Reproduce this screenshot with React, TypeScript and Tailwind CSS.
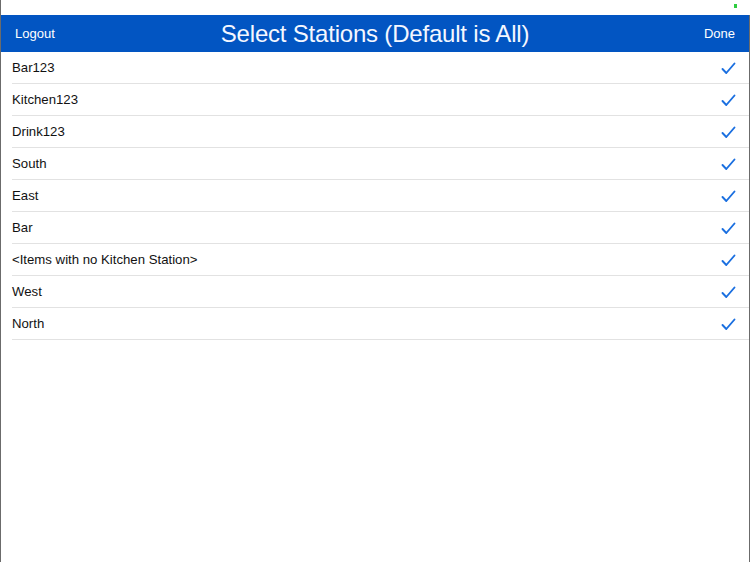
const stations = [
  "Bar123",
  "Kitchen123",
  "Drink123",
  "South",
  "East",
  "Bar",
  "<Items with no Kitchen Station>",
  "West",
  "North",
]

function Check() {
  return (
    <svg width="15" height="13" viewBox="0 0 15 13" fill="none">
      <path d="M1.5 7 L5.3 11 L13.5 1.5" stroke="#1a6fe0" strokeWidth="1.9" strokeLinecap="round" strokeLinejoin="round" />
    </svg>
  )
}

export default function App() {
  return (
    <div className="flex h-[562px] w-[750px] flex-col border-l border-[#6b6b6b] bg-white" style={{ fontFamily: '"Liberation Sans", Arial, sans-serif' }}>
      <div className="flex h-[15px] shrink-0 items-start justify-end pr-[13px] pt-[4px]">
        <div className="h-[4px] w-[3px] bg-[#2ecc40]" />
      </div>
      <div className="flex flex-1 flex-col border-r border-[#6b6b6b]">
        <div className="flex h-[37px] shrink-0 items-center justify-between bg-[#0255c2] px-[14px] text-white">
          <span className="w-[60px] text-[13px]">Logout</span>
          <span className="text-[24px] font-light tracking-[-0.2px] text-[#f4f7ff]">Select Stations (Default is All)</span>
          <span className="w-[60px] text-right text-[13px]">Done</span>
        </div>
        <div className="pl-[11px]">
          {stations.map((s) => (
            <div key={s} className="flex h-[32px] items-center justify-between border-b border-[#e2e2e2] pr-[13px] pt-[1px]">
              <span className="text-[13.2px] text-[#111]">{s}</span>
              <Check />
            </div>
          ))}
        </div>
      </div>
    </div>
  )
}
